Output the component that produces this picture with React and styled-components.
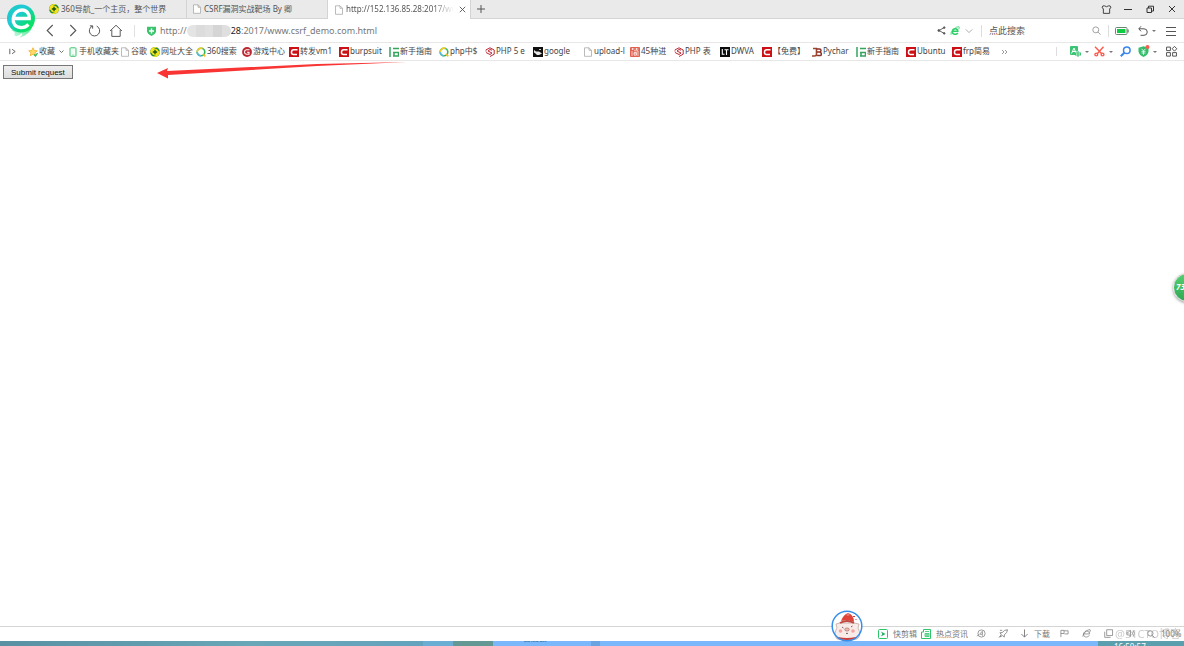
import React from "react";
import styled, { createGlobalStyle, css } from "styled-components";

const GlobalStyle = createGlobalStyle`
  * {
    box-sizing: border-box;
  }
  body {
    margin: 0;
    overflow: hidden;
    background: #fff;
    color: #555;
    font-family: "Noto Sans", "Noto Sans CJK SC", sans-serif;
    font-size: 8px;
  }
  button, input {
    font: inherit;
    color: inherit;
  }
  svg {
    display: block;
    flex: none;
  }
`;

const bookmarks = [
  { title: "收藏", icon: "star", width: 40, menu: true },
  { title: "手机收藏夹", icon: "phone", width: 52 },
  { title: "谷歌", icon: "page", width: 30 },
  { title: "网址大全", icon: "nav", width: 46 },
  { title: "360搜索", icon: "ring", width: 46 },
  { title: "游戏中心", icon: "game", width: 47 },
  { title: "转发vm1", icon: "csdn", width: 50 },
  { title: "burpsuit", icon: "csdn", width: 50 },
  { title: "新手指南", icon: "guide", width: 50 },
  { title: "php中$", icon: "ring", width: 46 },
  { title: "PHP 5 e", icon: "php", width: 48 },
  { title: "google", icon: "cat", width: 50 },
  { title: "upload-l", icon: "page", width: 47 },
  { title: "45种进", icon: "jian", width: 44 },
  { title: "PHP 表", icon: "php", width: 46 },
  { title: "DWVA", icon: "lt", width: 42 },
  { title: "【免费】", icon: "csdn", width: 50 },
  { title: "Pychar", icon: "jb", width: 44 },
  { title: "新手指南", icon: "guide", width: 50 },
  { title: "Ubuntu", icon: "csdn", width: 46 },
  { title: "frp简易", icon: "csdn", width: 48 },
];

const glyphs = {
  star: (
    <>
      <path d="M5 .7l1.3 2.8 3 .3-2.2 2 .7 3L5 7.300 2.200 8.800l.7-3-2.200-2 3-.3z" fill="#ffd968" stroke="#eda91c" strokeWidth=".7" />
      <path d="M6 7.500l1.500 1.500L9.500 6" fill="none" stroke="#35b95b" strokeWidth="1.300" />
    </>
  ),
  phone: (
    <>
      <rect x="2" y=".8" width="6" height="8.500" rx=".8" fill="#f2fff6" stroke="#3cc16c" />
      <path d="M4.500 8h1" stroke="#3cc16c" />
    </>
  ),
  page: <path d="M1.500.8h4.500l2.500 2.500v6h-7zM6 .8v2.500h2.500" fill="#fff" stroke="#aaa" strokeWidth=".8" />,
  nav: (
    <>
      <circle cx="5" cy="5" r="4.900" fill="#2a8d34" />
      <path d="M.1 5A4.900 4.900 0 0 1 7.500.8Q3 1 2 5.500 1 7 .1 5zM9.900 5A4.900 4.900 0 0 1 2.500 9.200Q7 9 8 4.500 9 3 9.900 5z" fill="#f9e41c" />
      <circle cx="5" cy="5" r="3.200" fill="#f9e41c" />
      <path d="M5 2.800v4.400M2.800 5h4.400" stroke="#14551b" strokeWidth="1.400" />
    </>
  ),
  ring: (
    <>
      <circle cx="5" cy="5" r="3.800" fill="none" stroke="#35b85c" strokeWidth="1.600" />
      <path d="M1.200 5A3.800 3.800 0 0 1 6.500 1.500" fill="none" stroke="#f7c928" strokeWidth="1.600" />
      <path d="M1.200 5A3.800 3.800 0 0 0 5 8.800" fill="none" stroke="#58b9da" strokeWidth="1.600" />
      <path d="M7 7l2.300 2.300" stroke="#f7b928" strokeWidth="1.700" />
    </>
  ),
  game: (
    <>
      <circle cx="5" cy="5" r="4.900" fill="#bc2731" />
      <path d="M7.500 2.800H4.500Q2.500 3 2.500 5T4.500 7.300H7V5.200H5" fill="none" stroke="#fff" strokeWidth="1.100" />
    </>
  ),
  csdn: (
    <>
      <rect width="10" height="10" fill="#cb1115" />
      <path d="M8.500 2.700H4.800Q2.500 2.700 2.500 5V5.500Q2.500 7.500 4.500 7.500H8" fill="none" stroke="#fff" strokeWidth="1.500" />
    </>
  ),
  guide: <path d="M1 0v10M4 1.500h6M4 5.500h6M4 9h6M5 5v4M9.500 5v4" fill="none" stroke="#33a55d" strokeWidth="1.500" />,
  php: (
    <>
      <path d="M.8 3L5 .8 9.200 3v4.200L5 9.500" fill="none" stroke="#bd2632" />
      <path d="M7 3.200L5 2.500 3 4l4 2-2 1.500-4-2M1 3.500v1" fill="none" stroke="#bd2632" />
    </>
  ),
  cat: (
    <>
      <rect width="10" height="10" fill="#101010" />
      <path d="M1 3l2 1.500h3l3 2-3 1.500H4L2.500 6.500 1 5.500z" fill="#e8e8e8" />
      <path d="M6 2h2v1H6z" fill="#ccc" />
    </>
  ),
  jian: (
    <>
      <rect width="10" height="10" rx="1" fill="#e2614e" />
      <path d="M1.500 2h3M5.500 2h3M2.500 1v2M6.500 1v2M2 4v5M4 3.800h4V9M4 5.500h2.500v2.700H4zM4 6.800h2.500" fill="none" stroke="#fff" strokeWidth=".7" />
    </>
  ),
  lt: (
    <>
      <rect width="10" height="10" fill="#0c0c0c" />
      <path d="M2.300 2v5.300h2.200M4.500 2.700H8.500M6.500 2.700v5.300" fill="none" stroke="#fff" strokeWidth="1.100" />
    </>
  ),
  jb: (
    <>
      <path d="M1 1.500h3.500V7q0 2-2 2H0" fill="none" stroke="#a1442d" strokeWidth="1.600" />
      <path d="M4.500 2h3q1.500 0 1.500 1.500T7.500 5h-3M7.500 5Q9.300 5 9.300 7T7.500 8.500h-3" fill="none" stroke="#8b3428" strokeWidth="1.500" />
    </>
  ),
};

const lines = {
  sidebar: <path d="M2 2v6M4.500 2.500L8 5 4.500 7.500" />,
  back: <path d="M7 0L2 5l5 5" />,
  forward: <path d="M3 0l5 5-5 5" />,
  reload: <path d="M3 1A4.700 4.700 0 1 0 7 1M.8.800H3.300V3.300" />,
  home: <path d="M0 5L5 .2 10 5M1.500 4v5.500h7V4" />,
  shirt: <path d="M3 1H1L0 3l1.500 1V9.300h7V4L10 3 9 1H7Q5 2.800 3 1z" />,
  minimise: <path d="M1 5.500h8" />,
  restore: <path d="M2 4h4.500v4.500H2zM3.500 4V2.200h5V7h-2" />,
  close: <path d="M2 2l6 6M8 2L2 8" />,
  plus: <path d="M5 1v8M1 5h8" />,
  down: <path d="M1 3l4 4 4-4" />,
  search: <path d="M7.500 4.300a3.300 3.300 0 1 1-6.600 0 3.300 3.300 0 0 1 6.600 0zM6.600 6.700L9.500 9.500" />,
  undo: <path d="M3 .3L.8 2.800 3 5.300M1 2.800h5a3.200 3.200 0 0 1 0 6.500H2.500" />,
  menu: <path d="M0 1.500h10M0 5.500h10M0 9.500h10" />,
  apps: <path d="M.5 1h3.500v3.200H.5zM.5 6h3.500v3.200H.5zM6 6h3.500v3.200H6zM7.700.3L9.800 2.500 7.700 4.700 5.600 2.500z" />,
  more: <path d="M2 3l2 2-2 2M5 3l2 2-2 2" />,
  share: (
    <>
      <path d="M8 1.800L2.200 5 8 8.200" />
      <circle cx="8" cy="1.800" r=".9" fill="currentColor" />
      <circle cx="2" cy="5" r="1" fill="currentColor" />
      <circle cx="8" cy="8.200" r=".9" fill="currentColor" />
    </>
  ),
  speed: (
    <>
      <circle cx="5" cy="5" r="4" />
      <path d="M3 5.500L6 2.500v3.300H3M6 6v1.500M0 8l2-2" />
    </>
  ),
  rocket: <path d="M9.500.800Q6 .7 3.500 4L1 4.200l1.500 1.600L1 8.800l3-1.500L5.800 9 6 6.500Q9.200 4 9.500.800zM0 9.500l2-2M1 1.500h2.500" />,
  download: <path d="M5 .5v8.500M1.500 5.500L5 9l3.500-3.500" />,
  flags: <path d="M1 9V1.500h3.500V5H1M4.500 2H9v3.500H5" />,
  explorer: <path d="M2 5.500h6.500C8.500 2 3 .5 1.800 5.200 1 9.500 6.500 10 8.200 7M1 8.500C1 5 5.500.5 9 .8q1 .8-.8 3.200" />,
  windows: <path d="M3 .8h6.500v6.500H3zM.8 3v6.300h6.500" />,
  sound: <path d="M1 3.500h1.500L5 1.500v7L2.500 6.500H1zM6.500 3q1.500 2 0 4M8 1.500q2.500 3.500 0 7" />,
};

const LineIcon = ({ name, size = 10, stroke = 1, color = "currentColor" }) => (
  <svg width={size} height={size} viewBox="0 0 10 10" fill="none" stroke={color} strokeWidth={stroke} overflow="visible" aria-hidden="true">
    {lines[name]}
  </svg>
);

const SiteIcon = ({ name }) => (
  <svg width="10" height="10" viewBox="0 0 10 10" aria-hidden="true">
    {glyphs[name]}
  </svg>
);

const Caret = () => (
  <svg width="4" height="2" viewBox="0 0 4 2" aria-hidden="true">
    <path d="M0 0h4L2 2z" fill="#777" />
  </svg>
);

const BrowserLogo = () => (
  <svg width="30" height="36" viewBox="0 0 30 36" aria-hidden="true">
    <defs>
      <linearGradient id="logo" x1="0" y1="0" x2="1" y2="1">
        <stop offset="0" stopColor="#19cfb0" />
        <stop offset=".35" stopColor="#20c8dc" />
        <stop offset=".7" stopColor="#0bdc75" />
        <stop offset="1" stopColor="#08e84d" />
      </linearGradient>
      <linearGradient id="tail" x1="0" y1="1" x2="1" y2="0">
        <stop offset="0" stopColor="#8ff0c0" stopOpacity=".4" />
        <stop offset="1" stopColor="#0ddc68" />
      </linearGradient>
    </defs>
    <path d="M5 26L27 21Q24 31 13 34 17 31 16 29 11 34 8 31 11 29 5 26z" fill="url(#tail)" />
    <circle cx="15" cy="14.500" r="14" fill="url(#logo)" />
    <path d="M22.500 20.500Q19 24 14.500 23.500C9 23 6.500 19 7.300 14 8 9 11.500 6 16 6c4.500 0 7.500 3.500 7.300 8.500H9" fill="none" stroke="#fff" strokeWidth="3.300" />
  </svg>
);

const Shield = () => (
  <svg width="9" height="10" viewBox="0 0 9 10" aria-hidden="true">
    <path d="M0 .8h9v5Q8 9 4.500 10 1 9 0 5.800z" fill="#3ac56c" />
    <path d="M4.500 2.500v5M2 5h5" stroke="#fff" strokeWidth="1.400" />
  </svg>
);

const EngineIcon = () => (
  <svg width="10" height="10" viewBox="0 0 10 10" fill="none" stroke="#2dcf66" aria-hidden="true">
    <path d="M2.500 5.300h5.300C7.800 2 3 1.700 2.300 5.300 2 9 6.500 9 7.800 7" strokeWidth="1.500" />
    <path d="M1 8.800Q0 7 3.500 3.500T9 .800q1 .7-.5 2.500" strokeWidth=".8" />
  </svg>
);

const Battery = () => (
  <svg width="14" height="8" viewBox="0 0 14 8" aria-hidden="true">
    <rect x=".5" y=".5" width="11.500" height="7" rx="1" fill="#fff" stroke="#69866f" />
    <rect x="2" y="2" width="8.500" height="4" fill="#12c943" />
    <path d="M13 2.500v3" stroke="#69866f" strokeWidth="1.500" />
  </svg>
);

const Translate = () => (
  <svg width="11" height="11" viewBox="0 0 11 11" aria-hidden="true">
    <rect width="8" height="9" rx="1" fill="#3cc475" />
    <path d="M1.500 7.500L4 2l2 5M2.500 5.500h3" fill="none" stroke="#fff" />
    <path d="M8 5v6M5 8h6" fill="none" stroke="#fff" strokeWidth="3" />
    <path d="M8 5v6M5.500 7h5v2h-5z" fill="none" stroke="#3cc475" strokeWidth="1.100" />
  </svg>
);

const Scissors = () => (
  <svg width="11" height="11" viewBox="0 0 11 11" fill="none" stroke="#fb5b4c" strokeWidth="1.400" aria-hidden="true">
    <path d="M1 .7L8 8M9.500.7L3 8" />
    <circle cx="2.300" cy="8.500" r="1.400" />
    <circle cx="8.500" cy="8.500" r="1.400" />
  </svg>
);

const Finder = () => (
  <svg width="11" height="11" viewBox="0 0 11 11" fill="none" stroke="#3986ee" aria-hidden="true">
    <circle cx="6.800" cy="4.200" r="3.300" strokeWidth="1.500" />
    <path d="M4.300 6.700L.8 10.200" strokeWidth="2" />
  </svg>
);

const Wallet = () => (
  <svg width="11" height="11" viewBox="0 0 11 11" overflow="visible" aria-hidden="true">
    <path d="M.5 1.800L5.500.300l5 1.500v4Q9.500 9.500 5.500 11 1.500 9.500.5 5.800z" fill="#36bd6b" />
    <path d="M3.500 2.800l2 2 2-2M5.500 4.800v4M3.500 5.300h4M3.500 7h4" fill="none" stroke="#fff" strokeWidth=".8" />
    <circle cx="9.500" cy="1" r="2" fill="#fa5c50" />
  </svg>
);

const RedArrow = () => (
  <svg width="250" height="20" viewBox="0 0 250 20" aria-hidden="true">
    <path d="M0 12L11 7l-1 3L160 3 250 1 160 5 11 14v3.500z" fill="#f93534" />
  </svg>
);

const Clip = () => (
  <svg width="10" height="10" viewBox="0 0 10 10" aria-hidden="true">
    <rect x=".5" y=".5" width="9" height="9" rx="1" fill="#fff" stroke="#2dc46b" />
    <path d="M3 2.500L7.500 5 3 7.500 4.300 5z" fill="#20ae5c" />
  </svg>
);

const News = () => (
  <svg width="10" height="10" viewBox="0 0 10 10" fill="none" stroke="#2dc46b" aria-hidden="true">
    <path d="M2.500.5h7v9H.5V3h2z" />
    <path d="M4 2.500h4M4 4.500h4v3H4zM4 6h4M6 4.500v3" strokeWidth=".8" />
  </svg>
);

const Mascot = () => (
  <svg width="32" height="32" viewBox="0 0 32 32" aria-hidden="true">
    <circle cx="16" cy="16" r="14.800" fill="#fff" />
    <path d="M5 14l4-1h14l5 1-1 4q4 7-1 11H6q-4-5 0-11z" fill="#f9ece8" stroke="#b89c98" strokeWidth=".7" />
    <path d="M10 11Q12 5 17 3q6 2 6 9-7-3-13-1z" fill="#e04438" />
    <path d="M9 13q7-4 14 0" fill="none" stroke="#c04a43" strokeWidth="2" />
    <circle cx="17" cy="4.500" r="1.500" fill="#e37b70" />
    <circle cx="9.500" cy="21" r="1.800" fill="#f5a3a1" />
    <circle cx="22" cy="21" r="1.800" fill="#f5a3a1" />
    <ellipse cx="16" cy="19.500" rx="2.300" ry="1.600" fill="#f3b5b0" stroke="#85504c" strokeWidth=".5" />
    <path d="M11 17l1.500 1M20 17l1.500-1M15 23q1 1.500 2 0" fill="none" stroke="#563a39" strokeWidth=".8" />
    <path d="M7 28q9 2 18 0" fill="none" stroke="#ce3d39" strokeWidth="2" />
    <path d="M22 6l1 1 1-1M25 9v1" fill="none" stroke="#cd3b43" />
    <circle cx="16" cy="16" r="14.800" fill="none" stroke="#378fe9" strokeWidth="1.500" />
  </svg>
);

const App = () => (
  <>
    <GlobalStyle />
    <Window>
      <LogoButton aria-label="360浏览器"><BrowserLogo /></LogoButton>
      <TabBar>
        <Tab>
          <SiteIcon name="nav" />
          <TabTitle>360导航_一个主页，整个世界</TabTitle>
        </Tab>
        <Tab $inset>
          <SiteIcon name="page" />
          <TabTitle>CSRF漏洞实战靶场 By 卿</TabTitle>
        </Tab>
        <Tab $active>
          <SiteIcon name="page" />
          <TabTitle $fade>http://152.136.85.28:2017/www</TabTitle>
          <IconButton $width={12} aria-label="关闭标签页"><LineIcon name="close" size={9} /></IconButton>
        </Tab>
        <IconButton $width={20} aria-label="新标签页"><LineIcon name="plus" /></IconButton>
        <WindowControls>
          <IconButton $width={22} aria-label="皮肤"><LineIcon name="shirt" size={9} /></IconButton>
          <IconButton $width={22} aria-label="最小化"><LineIcon name="minimise" /></IconButton>
          <IconButton $width={22} aria-label="还原"><LineIcon name="restore" /></IconButton>
          <IconButton $width={22} aria-label="关闭"><LineIcon name="close" /></IconButton>
        </WindowControls>
      </TabBar>

      <AddressBar>
        <NavButtons>
          <IconButton $width={22} aria-label="后退"><LineIcon name="back" size={11} /></IconButton>
          <IconButton $width={22} aria-label="前进"><LineIcon name="forward" size={11} /></IconButton>
          <IconButton $width={22} aria-label="刷新"><LineIcon name="reload" size={11} stroke={0.9} /></IconButton>
          <IconButton $width={22} aria-label="主页"><LineIcon name="home" size={12} stroke={0.8} /></IconButton>
        </NavButtons>
        <Divider />
        <Location>
          <Shield />
          <Host>
            http://<Mosaic /><b>28</b>
          </Host>
          <PathInput aria-label="网址" defaultValue=":2017/www.csrf_demo.com.html" />
        </Location>
        <IconButton $width={14} aria-label="分享"><LineIcon name="share" size={9} /></IconButton>
        <IconButton $width={14} aria-label="极速模式"><EngineIcon /></IconButton>
        <IconButton $width={14} aria-label="展开"><LineIcon name="down" size={8} color="#999" /></IconButton>
        <SearchBox>
          <SearchInput aria-label="搜索" placeholder="点此搜索" />
          <LineIcon name="search" size={9} color="#999" />
        </SearchBox>
        <IconButton $width={26} aria-label="电池"><Battery /></IconButton>
        <IconButton $width={24} aria-label="恢复"><LineIcon name="undo" /><Caret /></IconButton>
        <IconButton $width={24} aria-label="菜单"><LineIcon name="menu" /></IconButton>
      </AddressBar>

      <BookmarkBar>
        <IconButton $width={24} aria-label="侧边栏"><LineIcon name="sidebar" size={9} /></IconButton>
        <BookmarkList>
          {bookmarks.map((item, index) => (
            <Bookmark href="#" key={index} $width={item.width}>
              <SiteIcon name={item.icon} />
              <span>{item.title}</span>
              {item.menu && <LineIcon name="down" size={5} stroke={1.5} />}
            </Bookmark>
          ))}
          <IconButton $width={10} aria-label="更多"><LineIcon name="more" color="#999" /></IconButton>
        </BookmarkList>
        <ToolDivider />
        <IconButton $width={24} aria-label="翻译"><Translate /><Caret /></IconButton>
        <IconButton $width={24} aria-label="截图"><Scissors /><Caret /></IconButton>
        <IconButton $width={20} aria-label="查找"><Finder /></IconButton>
        <IconButton $width={24} aria-label="网银"><Wallet /><Caret /></IconButton>
        <IconButton $width={24} aria-label="扩展"><LineIcon name="apps" size={11} stroke={0.9} /></IconButton>
      </BookmarkBar>

      <Page>
        <SubmitButton type="submit">Submit request</SubmitButton>
        <Pointer><RedArrow /></Pointer>
      </Page>

      <StatusBar>
        <StatusButton><Clip />快剪辑</StatusButton>
        <StatusButton><News />热点资讯</StatusButton>
        <IconButton $width={22} aria-label="加速"><LineIcon name="speed" size={9} stroke={0.8} /></IconButton>
        <IconButton $width={22} aria-label="加速器"><LineIcon name="rocket" size={9} stroke={0.9} /></IconButton>
        <StatusButton $inset><LineIcon name="download" size={9} />下载</StatusButton>
        <IconButton $width={22} aria-label="标记"><LineIcon name="flags" size={9} stroke={0.8} /></IconButton>
        <IconButton $width={22} aria-label="内核"><LineIcon name="explorer" size={9} stroke={0.8} /></IconButton>
        <IconButton $width={22} aria-label="窗口"><LineIcon name="windows" size={9} stroke={0.8} /></IconButton>
        <IconButton $width={22} aria-label="声音"><LineIcon name="sound" size={9} stroke={0.8} /></IconButton>
        <IconButton $width={20} aria-label="缩放"><LineIcon name="search" size={8} /></IconButton>
        <Zoom>100%</Zoom>
        <Watermark>@51CTO博客</Watermark>
      </StatusBar>

      <TaskBar>
        <Desktop />
        <TaskStrip />
        <TaskShade />
        <TaskActive>
          <TaskLabel>■ 百度云</TaskLabel>
        </TaskActive>
        <TaskGap />
        <TaskRest />
        <Clock>16:50:57</Clock>
      </TaskBar>

      <MascotButton aria-label="助手"><Mascot /></MascotButton>
      <SpeedBall aria-label="加速球">73</SpeedBall>
    </Window>
  </>
);

const Window = styled.div`
  position: relative;
  display: flex;
  flex-direction: column;
  height: 100vh;
  overflow: hidden;
`;

const plainButton = css`
  padding: 0;
  border: 0;
  background: none;
`;

const IconButton = styled.button`
  ${plainButton}
  display: flex;
  flex: none;
  align-items: center;
  justify-content: center;
  gap: 4px;
  width: ${(props) => props.$width}px;
  height: 100%;
`;

const LogoButton = styled.button`
  ${plainButton}
  position: absolute;
  top: 4px;
  left: 6px;
  z-index: 2;
`;

const TabBar = styled.div`
  display: flex;
  height: 19px;
  padding: 0 1px 0 46px;
  background: #eaeaea;
  border-bottom: 1px solid #d4d4d4;
`;

const Tab = styled.div`
  display: flex;
  align-items: center;
  gap: 2px;
  width: 141px;
  height: 18px;
  padding: 0 3px;
  border-right: 1px solid #d4d4d4;

  ${(props) =>
    props.$inset &&
    css`
      padding-left: 5px;
    `}

  ${(props) =>
    props.$active &&
    css`
      width: 143px;
      height: 19px;
      padding: 0 2px 0 6px;
      background: #fff;
    `}
`;

const TabTitle = styled.span`
  flex: 1;
  padding-bottom: 2px;
  overflow: hidden;
  white-space: nowrap;
  mask-image: ${(props) => (props.$fade ? "linear-gradient(90deg, #000 80%, transparent)" : "none")};
`;

const WindowControls = styled.div`
  display: flex;
  margin-left: auto;
  color: #333;
`;

const AddressBar = styled.div`
  display: flex;
  align-items: center;
  height: 24px;
  padding: 0 1px 0 39px;
  border-bottom: 1px solid #e7e7e7;
`;

const NavButtons = styled.div`
  display: flex;
  height: 100%;
`;

const Divider = styled.div`
  width: 1px;
  height: 12px;
  margin: 0 12px 0 7px;
  background: #e0e0e0;
`;

const Location = styled.div`
  display: flex;
  flex: 1;
  align-items: center;
  gap: 4px;
  color: #777;
  font-size: 9px;
`;

const Host = styled.label`
  display: flex;
  align-items: center;
  margin-right: -4px;

  b {
    color: #222;
    font-weight: normal;
  }
`;

const Mosaic = styled.span`
  width: 44px;
  height: 12px;
  border-radius: 6px;
  background: linear-gradient(90deg, #e4e4e4 0 20%, #dcdcdc 20% 40%, #e0e0e0 40% 60%, #d5d5d5 60% 80%, #dfdfdf 80%);
`;

const PathInput = styled.input`
  flex: 1;
  min-width: 0;
  padding: 0;
  border: 0;
  outline: 0;
`;

const SearchBox = styled.div`
  display: flex;
  align-items: center;
  width: 128px;
  height: 12px;
  margin-left: 5px;
  padding: 0 7px;
  border: 1px solid #ddd;
  border-width: 0 1px;
`;

const SearchInput = styled.input`
  flex: 1;
  min-width: 0;
  padding: 0;
  border: 0;
  outline: 0;
  font-size: 9px;

  &::placeholder {
    color: #555;
  }
`;

const BookmarkBar = styled.div`
  display: flex;
  align-items: center;
  height: 18px;
  padding-right: 1px;
  border-bottom: 1px solid #e7e7e7;
`;

const BookmarkList = styled.nav`
  display: flex;
  flex: 1;
  align-items: center;
  min-width: 0;
  padding-left: 4px;
  overflow: hidden;
`;

const Bookmark = styled.a`
  display: flex;
  flex: none;
  align-items: center;
  gap: 1px;
  width: ${(props) => props.$width}px;
  color: #444;
  text-decoration: none;
  white-space: nowrap;

  span {
    padding-bottom: 2px;
  }

  span + svg {
    margin-left: 3px;
  }
`;

const ToolDivider = styled.div`
  width: 1px;
  height: 9px;
  margin-right: 10px;
  background: #ddd;
`;

const Page = styled.main`
  position: relative;
  flex: 1;
  padding: 4px 3px;
`;

const SubmitButton = styled.button`
  display: block;
  height: 14px;
  padding: 0 7px;
  border: 1px solid #777;
  background: linear-gradient(#eee, #ddd);
  color: #111;
  font: 8px "Liberation Sans", Arial, sans-serif;
`;

const Pointer = styled.div`
  position: absolute;
  top: 0;
  left: 157px;
`;

const StatusBar = styled.footer`
  position: relative;
  display: flex;
  align-items: center;
  justify-content: flex-end;
  height: 15px;
  padding: 0 3px 1px 0;
  border-top: 1px solid #d5d5d5;
  color: #777;
`;

const StatusButton = styled.button`
  ${plainButton}
  display: flex;
  align-items: center;
  gap: 5px;
  margin-right: ${(props) => (props.$inset ? "3px" : "4px")};
  margin-left: ${(props) => (props.$inset ? "6px" : "0")};
  white-space: nowrap;

  & + & {
    margin-right: 2px;
  }
`;

const Zoom = styled.span`
  width: 20px;
`;

const Watermark = styled.span`
  position: absolute;
  right: 3px;
  color: #aaa;
  font-size: 11px;
  line-height: 14px;
  opacity: 0.6;
`;

const TaskBar = styled.div`
  display: flex;
  height: 5px;
  overflow: hidden;
`;

const Desktop = styled.div`
  width: 423px;
  background: linear-gradient(90deg, #5991a3, #68a6b8 60%, #64a3bd);
`;

const TaskStrip = styled.div`
  width: 30px;
  background: #6aaed4;
`;

const TaskShade = styled.div`
  width: 40px;
  background: #649894;
`;

const TaskActive = styled.div`
  width: 98px;
  padding-left: 20px;
  overflow: hidden;
  background: #7ab7fb;
`;

const TaskLabel = styled.span`
  display: block;
  margin-top: -8px;
  color: #36709f;
  line-height: 10px;
`;

const TaskGap = styled.div`
  width: 9px;
  background: #69a4e0;
`;

const TaskRest = styled.div`
  flex: 1;
  background: #7ab7fb;
`;

const Clock = styled.time`
  width: 86px;
  padding: 2px 0 0 16px;
  background: #5b9eae;
  color: #fff;
  line-height: 8px;
`;

const MascotButton = styled.button`
  ${plainButton}
  position: absolute;
  right: 321px;
  bottom: 4px;
`;

const SpeedBall = styled.button`
  position: absolute;
  top: 273px;
  right: -18px;
  width: 29px;
  height: 29px;
  padding: 0 0 3px 2px;
  border: 1px solid #dcdcdc;
  border-radius: 50%;
  background: linear-gradient(#55cf71, #2faa52);
  box-shadow: 0 1px 3px #999;
  color: #fff;
  font-style: italic;
  font-weight: bold;
  text-align: left;
`;

export default App;
